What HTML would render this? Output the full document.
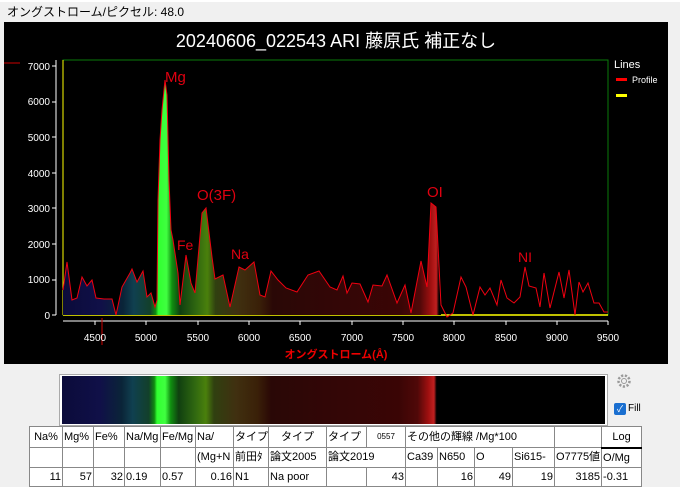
<!DOCTYPE html>
<html><head><meta charset="utf-8"><style>
body{margin:0;width:680px;height:483px;background:#f0f0f0;position:relative;overflow:hidden;font-family:"Liberation Sans","Noto Sans CJK JP",sans-serif}
.t{position:absolute;white-space:nowrap}
table{position:absolute;left:29px;top:426px;width:612px;border-collapse:collapse;background:#fff;font-size:11px;table-layout:fixed}
td{border:1px solid #888;padding:0 1px;height:18px;line-height:18px;overflow:hidden;white-space:nowrap;font-family:"Liberation Sans","Noto Sans CJK JP",sans-serif}
</style></head><body>
<div style="position:absolute;left:0;top:0;width:680px;height:2px;background:#fff"></div>
<div class="t" style="left:7px;top:3px;font-size:12px;color:#000">オングストローム/ピクセル: 48.0</div>
<svg style="position:absolute;left:0;top:0" width="680" height="370">
<defs>
<linearGradient id="g" gradientUnits="userSpaceOnUse" x1="63" y1="0" x2="608" y2="0">
<stop offset="0" stop-color="#0b0b3a"/>
<stop offset="0.07" stop-color="#101048"/>
<stop offset="0.11" stop-color="#0a2438"/>
<stop offset="0.13" stop-color="#104050"/>
<stop offset="0.16" stop-color="#12402a"/>
<stop offset="0.17" stop-color="#108a10"/>
<stop offset="0.175" stop-color="#30ff30"/>
<stop offset="0.19" stop-color="#40ff40"/>
<stop offset="0.2" stop-color="#109010"/>
<stop offset="0.215" stop-color="#104010"/>
<stop offset="0.245" stop-color="#306810"/>
<stop offset="0.265" stop-color="#4a800c"/>
<stop offset="0.28" stop-color="#304010"/>
<stop offset="0.32" stop-color="#403010"/>
<stop offset="0.36" stop-color="#3a2008"/>
<stop offset="0.385" stop-color="#2a0806"/>
<stop offset="0.5" stop-color="#330606"/>
<stop offset="0.62" stop-color="#3a0505"/>
<stop offset="0.655" stop-color="#500808"/>
<stop offset="0.675" stop-color="#a01010"/>
<stop offset="0.685" stop-color="#c02020"/>
<stop offset="0.69" stop-color="#000"/>
<stop offset="1" stop-color="#000"/>
</linearGradient>
</defs>
<rect x="4" y="22" width="664" height="342" fill="#000"/>
<text x="336" y="47" fill="#fff" font-size="18" text-anchor="middle" font-family="Liberation Sans,Noto Sans CJK JP,sans-serif">20240606_022543 ARI 藤原氏  補正なし</text>
<rect x="63" y="60" width="545" height="255" fill="none" stroke="#0a7a0a"/>
<line x1="63" y1="60" x2="63" y2="315" stroke="#ff0"/>
<line x1="63" y1="315" x2="608" y2="315" stroke="#ff0" stroke-width="1.5"/>
<g fill="#fff" font-size="10" text-anchor="end" font-family="Liberation Sans,sans-serif">
<text x="50" y="70">7000</text><text x="50" y="105">6000</text><text x="50" y="141">5000</text><text x="50" y="177">4000</text><text x="50" y="212">3000</text><text x="50" y="248">2000</text><text x="50" y="283">1000</text><text x="50" y="319">0</text>
</g>
<g stroke="#fff"><line x1="56" y1="60" x2="56" y2="315"/>
<line x1="52" y1="66" x2="56" y2="66"/><line x1="52" y1="102" x2="56" y2="102"/><line x1="52" y1="137" x2="56" y2="137"/><line x1="52" y1="173" x2="56" y2="173"/><line x1="52" y1="208" x2="56" y2="208"/><line x1="52" y1="244" x2="56" y2="244"/><line x1="52" y1="280" x2="56" y2="280"/><line x1="52" y1="315" x2="56" y2="315"/>
<line x1="63" y1="321" x2="608" y2="321"/>
<line x1="95" y1="321" x2="95" y2="325"/><line x1="146" y1="321" x2="146" y2="325"/><line x1="198" y1="321" x2="198" y2="325"/><line x1="249" y1="321" x2="249" y2="325"/><line x1="300" y1="321" x2="300" y2="325"/><line x1="352" y1="321" x2="352" y2="325"/><line x1="403" y1="321" x2="403" y2="325"/><line x1="454" y1="321" x2="454" y2="325"/><line x1="506" y1="321" x2="506" y2="325"/><line x1="557" y1="321" x2="557" y2="325"/><line x1="608" y1="321" x2="608" y2="325"/>
</g>
<line x1="102" y1="318" x2="102" y2="345" stroke="#c00"/>
<line x1="4" y1="63" x2="20" y2="63" stroke="#c00"/>
<g fill="#fff" font-size="10" text-anchor="middle" font-family="Liberation Sans,sans-serif">
<text x="95" y="341">4500</text><text x="146" y="341">5000</text><text x="198" y="341">5500</text><text x="249" y="341">6000</text><text x="300" y="341">6500</text><text x="352" y="341">7000</text><text x="403" y="341">7500</text><text x="454" y="341">8000</text><text x="506" y="341">8500</text><text x="557" y="341">9000</text><text x="608" y="341">9500</text>
</g>
<text x="336" y="358" fill="#e00" font-size="11" font-weight="bold" text-anchor="middle" font-family="Liberation Sans,Noto Sans CJK JP,sans-serif">オングストローム(Å)</text>
<polygon fill="url(#g)" points="63,315 63,290 67,262 72,300 77,298 82,277 87,286 92,280 96,298 104,299 112,299 116,315 122,287 130,273 132,269 137,282 143,271 147,297 151,293 155,307 157,300 158,200 160,140 162,110 165,80 167,95 169,180 171,230 173,240 178,273 180,305 186,255 191,283 195,293 202,213 206,208 212,257 215,279 223,275 230,307 239,267 245,270 254,262 260,295 265,297 271,271 278,280 286,288 297,292 308,275 319,271 330,287 337,290 343,276 347,293 352,283 360,284 368,302 373,285 382,286 387,275 397,303 405,285 411,313 421,261 427,287 431,203 436,207 441,305 441,315"/>
<polyline fill="none" stroke="#f00010" stroke-width="1" points="63,290 67,262 72,300 77,298 82,277 87,286 92,280 96,298 104,299 112,299 116,315 122,287 130,273 132,269 137,282 143,271 147,297 151,293 155,307 157,300 158,200 160,140 162,110 165,80 167,95 169,180 171,230 173,240 178,273 180,305 186,255 191,283 195,293 202,213 206,208 212,257 215,279 223,275 230,307 239,267 245,270 254,262 260,295 265,297 271,271 278,280 286,288 297,292 308,275 319,271 330,287 337,290 343,276 347,293 352,283 360,284 368,302 373,285 382,286 387,275 397,303 405,285 411,313 421,261 427,287 431,203 436,207 441,305 447,317 453,313 461,277 466,287 473,315 480,287 485,295 490,288 497,305 501,280 507,298 514,303 520,297 525,267 529,286 536,288 540,307 544,273 550,308 559,272 564,298 569,270 575,315 579,282 583,292 588,283 594,303 599,303 604,312 608,312"/>
<g fill="#e00010" font-family="Liberation Sans,sans-serif">
<text x="165" y="82" font-size="15">Mg</text>
<text x="197" y="200" font-size="15">O(3F)</text>
<text x="177" y="250" font-size="14">Fe</text>
<text x="231" y="259" font-size="14">Na</text>
<text x="427" y="197" font-size="15">OI</text>
<text x="518" y="262" font-size="14">NI</text>
</g>
<text x="614" y="68" fill="#fff" font-size="11" font-family="Liberation Sans,sans-serif">Lines</text>
<rect x="616" y="78" width="11" height="3" fill="#f00"/>
<text x="632" y="83" fill="#fff" font-size="9" font-family="Liberation Sans,sans-serif">Profile</text>
<rect x="616" y="94" width="11" height="3" fill="#ff0"/>
</svg>
<div style="position:absolute;left:59px;top:374px;width:547px;height:50px;border:1px solid #aaa;background:#fff"></div>
<div style="position:absolute;left:62px;top:376px;width:543px;height:48px;background:linear-gradient(90deg,#0b0b3a 0%,#101048 7%,#0a2438 11%,#104050 13%,#12402a 16%,#108a10 17%,#30ff30 17.5%,#40ff40 19%,#109010 20%,#104010 21.5%,#306810 24.5%,#4a800c 26.5%,#304010 28%,#403010 32%,#3a2008 36%,#2a0806 38.5%,#330606 50%,#3a0505 62%,#500808 65.5%,#a01010 67.5%,#c02020 68.5%,#000 69%,#000 100%)"></div>
<svg style="position:absolute;left:615px;top:372px" width="18" height="18" viewBox="0 0 18 18"><circle cx="9" cy="9" r="5.5" fill="none" stroke="#999" stroke-width="2.5" stroke-dasharray="2.2 1.6"/><circle cx="9" cy="9" r="2.5" fill="none" stroke="#999"/></svg>
<div style="position:absolute;left:614px;top:403px;width:12px;height:12px;background:#1a6fd0;border-radius:2px;color:#fff;font-size:9px;line-height:12px;text-align:center">✓</div>
<div class="t" style="left:628px;top:403px;font-size:10px">Fill</div>
<table>
<colgroup><col style="width:33px"><col style="width:31px"><col style="width:31px"><col style="width:36px"><col style="width:35px"><col style="width:38px"><col style="width:35px"><col style="width:58px"><col style="width:40px"><col style="width:39px"><col style="width:32px"><col style="width:37px"><col style="width:38px"><col style="width:42px"><col style="width:47px"><col style="width:40px"></colgroup>
<tr><td style="text-align:center;height:20px">Na%</td><td>Mg%</td><td>Fe%</td><td>Na/Mg</td><td>Fe/Mg</td><td>Na/</td><td>タイプ</td><td style="text-align:center">タイプ</td><td>タイプ</td><td style="font-size:8px;text-align:center">0557</td><td colspan="4">その他の輝線 /Mg*100</td><td></td><td style="text-align:center;border-bottom:2px solid #000">Log</td></tr>
<tr><td></td><td></td><td></td><td></td><td></td><td>(Mg+N</td><td>前田ﾀ</td><td>論文2005</td><td colspan="2">論文2019</td><td>Ca39</td><td>N650</td><td>O</td><td>Si615-</td><td>O7775値</td><td>O/Mg</td></tr>
<tr><td style="text-align:right">11</td><td style="text-align:right">57</td><td style="text-align:right">32</td><td>0.19</td><td>0.57</td><td style="text-align:right">0.16</td><td>N1</td><td>Na poor</td><td></td><td style="text-align:right">43</td><td></td><td style="text-align:right">16</td><td style="text-align:right">49</td><td style="text-align:right">19</td><td style="text-align:right">3185</td><td>-0.31</td></tr>
</table>
</body></html>
